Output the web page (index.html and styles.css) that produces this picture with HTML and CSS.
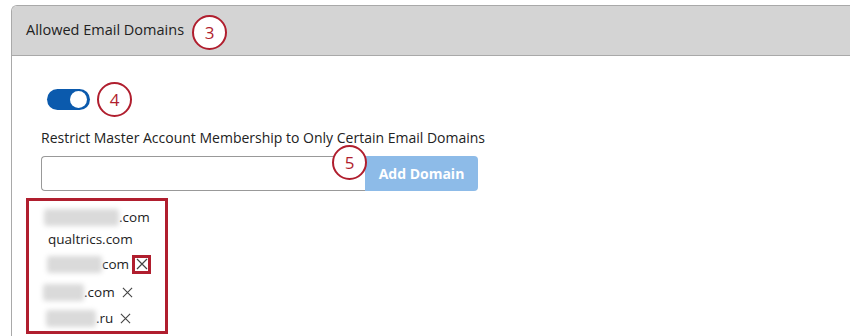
FILE: index.html
```html
<!DOCTYPE html>
<html lang="en">
<head>
    <meta charset="UTF-8">
    <title>Allowed Email Domains</title>
    <link rel="stylesheet" href="styles.css">
</head>
<body>
    <div class="panel">
        <div class="panel-header">
            <span class="panel-title">Allowed Email Domains</span>
            <span class="callout callout-3">3</span>
        </div>

        <div class="panel-body">
            <div class="toggle-row">
                <span class="toggle"><span class="knob"></span></span>
                <span class="callout callout-4">4</span>
            </div>

            <p class="field-label">Restrict Master Account Membership to Only Certain Email Domains</p>

            <div class="domain-form">
                <input type="text" class="domain-input">
                <button type="button" class="add-btn" disabled>Add Domain</button>
                <span class="callout callout-5">5</span>
            </div>

            <!-- domain list (names blurred) -->
            <ul class="domain-list">
                <li class="row-1"><span class="blur w75"></span>.com</li>
                <li class="row-2">qualtrics.com</li>
                <li class="row-3"><span class="blur w55"></span>com
                    <span class="remove boxed"><svg width="12" height="12" viewBox="0 0 12 12"><path d="M1 1L11 11M11 1L1 11" stroke="#444" stroke-width="1.2"/></svg></span>
                </li>
                <li class="row-4"><span class="blur w41"></span>.com
                    <span class="remove"><svg width="11" height="11" viewBox="0 0 12 12"><path d="M1 1L11 11M11 1L1 11" stroke="#444" stroke-width="1.2"/></svg></span>
                </li>
                <li class="row-5"><span class="blur w50"></span>.ru
                    <span class="remove"><svg width="11" height="11" viewBox="0 0 12 12"><path d="M1 1L11 11M11 1L1 11" stroke="#444" stroke-width="1.2"/></svg></span>
                </li>
            </ul>
        </div>
    </div>
</body>
</html>
```

FILE: styles.css
```css
body {
    margin: 0;
    background: #fff;
    font-family: "Open Sans", Arial, sans-serif;
    color: #333;
    overflow: hidden;
}
.panel {
    margin: 5px 0 0 11px;
    border-left: 1px solid #a9a9a9;
    border-top: 1px solid #a9a9a9;
    border-top-left-radius: 6px;
    height: 400px;
}
.panel-header {
    height: 49px;
    background: #d4d4d4;
    border-bottom: 1px solid #a9a9a9;
    border-top-left-radius: 5px;
    display: flex;
    align-items: center;
    padding-left: 14px;
}
.panel-title {
    font-size: 14.5px;
    color: #222;
    margin-top: -3px;
}
.callout {
    box-sizing: border-box;
    width: 35px;
    height: 35px;
    border: 2.5px solid #b01e2e;
    border-radius: 50%;
    background: #fff;
    color: #b01e2e;
    font-size: 17px;
    display: inline-flex;
    align-items: center;
    justify-content: center;
}
.callout-3 {
    margin-left: 8px;
    margin-top: 4px;
}
.panel-body {
    padding: 26px 0 0 29px;
}
.toggle-row {
    display: flex;
    align-items: center;
    height: 34px;
}
.toggle {
    position: relative;
    box-sizing: border-box;
    width: 43px;
    height: 21px;
    margin-left: 6px;
    border-radius: 11px;
    background: #0b5aad;
}
.knob {
    position: absolute;
    top: 2px;
    right: 3px;
    width: 17px;
    height: 17px;
    border-radius: 50%;
    background: #fff;
}
.callout-4 {
    margin-left: 7px;
}
.field-label {
    margin: 12px 0 0 0;
    font-size: 14px;
    color: #222;
}
.domain-form {
    position: relative;
    display: flex;
    margin-top: 9px;
    height: 35px;
}
.domain-input {
    box-sizing: border-box;
    width: 324px;
    height: 35px;
    border: 1px solid #999;
    border-radius: 4px 0 0 4px;
    border-right: none;
    margin: 0;
}
.add-btn {
    box-sizing: border-box;
    width: 113px;
    height: 35px;
    border: none;
    border-radius: 0 4px 4px 0;
    background: #8dbbe8;
    color: #fff;
    font-family: "Open Sans", Arial, sans-serif;
    font-weight: bold;
    font-size: 14px;
}
.callout-5 {
    position: absolute;
    left: 291px;
    top: -11px;
}
.domain-list {
    list-style: none;
    box-sizing: border-box;
    width: 142px;
    height: 136px;
    margin: 7px 0 0 -15px;
    padding: 5px 0 0 0;
    border: 3px solid #b01e2e;
    font-size: 13.5px;
    color: #222;
}
.domain-list li {
    display: flex;
    align-items: center;
    height: 22px;
}
.row-1 { padding-left: 15px; }
.row-2 { padding-left: 19px; height: 21px !important; }
.row-3 { padding-left: 18px; margin-top: 4px; }
.row-4 { padding-left: 14px; margin-top: 6px; }
.row-5 { padding-left: 17px; margin-top: 4px; }
.blur {
    display: inline-block;
    height: 17px;
    background: #dadada;
    border-radius: 3px;
    filter: blur(2.5px);
}
.w75 { width: 75px; }
.w55 { width: 55px; }
.w41 { width: 41px; }
.w50 { width: 50px; }
.remove {
    display: inline-flex;
    align-items: center;
    justify-content: center;
    margin-left: 7px;
}
.remove.boxed {
    margin-left: 3px;
    width: 19px;
    height: 19px;
    box-sizing: border-box;
    border: 3px solid #b01e2e;
}
```
